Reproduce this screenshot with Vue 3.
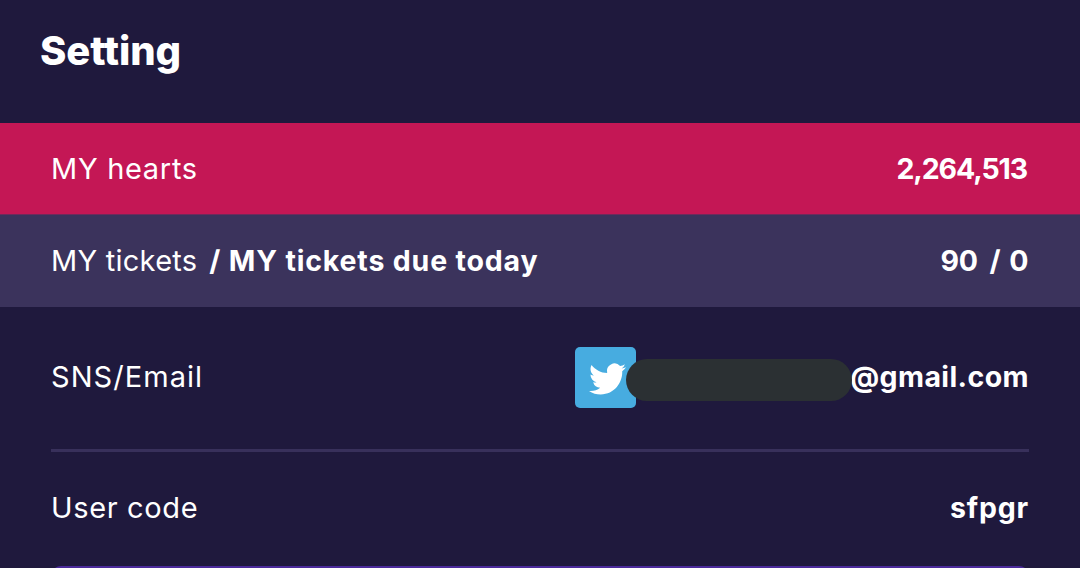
<template>
  <main class="setting-page">
    <header class="page-header">
      <h1 class="page-title">Setting</h1>
    </header>

    <section class="row row-hearts">
      <span class="label label-hearts">MY hearts</span>
      <strong class="value value-hearts">{{ hearts }}</strong>
    </section>

    <section class="row row-tickets">
      <div class="ticket-labels">
        <span class="label label-tickets">MY tickets</span>
        <strong class="value value-due">/ MY tickets due today</strong>
      </div>
      <strong class="value value-tickets">
        <span>{{ tickets.total }}</span>
        <span class="slash">/</span>
        <span>{{ tickets.dueToday }}</span>
      </strong>
    </section>

    <div class="account">
      <section class="row row-email">
        <span class="label label-email">SNS/Email</span>
        <div class="email">
          <span class="sns-icon">
            <svg viewBox="0 0 24 24" fill="currentColor" preserveAspectRatio="none">
              <path d="M23.953 4.57a10 10 0 01-2.825.775 4.958 4.958 0 002.163-2.723c-.951.555-2.005.959-3.127 1.184a4.92 4.92 0 00-8.384 4.482C7.69 8.095 4.067 6.13 1.64 3.162a4.822 4.822 0 00-.666 2.475c0 1.71.87 3.213 2.188 4.096a4.904 4.904 0 01-2.228-.616v.06a4.923 4.923 0 003.946 4.827 4.996 4.996 0 01-2.212.085 4.936 4.936 0 004.604 3.417 9.867 9.867 0 01-6.102 2.105c-.39 0-.779-.023-1.17-.067a13.995 13.995 0 007.557 2.209c9.053 0 13.998-7.496 13.998-13.985 0-.21 0-.42-.015-.63A9.935 9.935 0 0024 4.59z" />
            </svg>
          </span>
          <span class="mask"></span>
          <strong class="value value-email">{{ emailDomain }}</strong>
        </div>
      </section>

      <section class="row row-code">
        <span class="label label-code">User code</span>
        <strong class="value value-code">{{ userCode }}</strong>
      </section>
    </div>

    <div class="next-panel"></div>
  </main>
</template>

<script setup>
const hearts = (2264513).toLocaleString('en-US')
const tickets = { total: 90, dueToday: 0 }
const emailDomain = '@gmail.com'
const userCode = 'sfpgr'
</script>

<style>
body {
  background: #1f193d;
  overflow: hidden;
}
</style>

<style scoped>
.setting-page {
  display: flex;
  flex-direction: column;
  width: 100%;
  height: 568px;
  overflow: hidden;
  box-sizing: border-box;
  background: #1f193d;
  color: #fff;
  font-family: Inter, "Open Sans", sans-serif;
}

.page-header {
  flex: none;
  display: flex;
  height: 123px;
  box-sizing: border-box;
  padding: 26px 40px 0;
}

.page-title {
  margin: 0;
  font-size: 40px;
  line-height: 50px;
  font-weight: 800;
  letter-spacing: -0.1px;
}

.row {
  flex: none;
  display: flex;
  align-items: center;
  justify-content: space-between;
  box-sizing: border-box;
  white-space: nowrap;
}

.row-hearts {
  height: 91px;
  padding: 0 52px 0 51px;
  background: #c41755;
}

.row-tickets {
  height: 93px;
  padding: 0 52px 1px 51px;
  border-top: 1px solid #6f2a5b;
  background: #3b335c;
}

.ticket-labels {
  display: flex;
  align-items: center;
  gap: 12px;
}

.label {
  font-size: 29px;
  line-height: 40px;
  font-weight: 400;
}

.label-hearts {
  letter-spacing: 0.7px;
}

.label-tickets {
  letter-spacing: 0.25px;
}

.label-email {
  margin-top: -2px;
  letter-spacing: 1.05px;
}

.label-code {
  letter-spacing: 0.65px;
}

.value {
  font-size: 28.5px;
  line-height: 40px;
  font-weight: 700;
}

.value-hearts {
  margin-right: 1px;
  letter-spacing: -1.1px;
}

.value-due {
  letter-spacing: 0.83px;
}

.value-tickets {
  display: flex;
  letter-spacing: -0.4px;
}

.slash {
  margin: 0 9px 0 12px;
}

.value-email {
  margin-top: -2px;
  letter-spacing: 0.4px;
}

.value-code {
  letter-spacing: 0.8px;
}

.account {
  flex: none;
  padding: 0 51px;
}

.row-email {
  height: 145px;
  padding-bottom: 1px;
  border-bottom: 3px solid #38305b;
}

.row-code {
  height: 114px;
  padding-bottom: 2px;
}

.email {
  display: flex;
  align-items: center;
}

.sns-icon {
  display: flex;
  align-items: center;
  justify-content: center;
  width: 61px;
  height: 61px;
  box-sizing: border-box;
  padding: 3px 0 0 3px;
  border-radius: 5px;
  background: #47ace0;
}

.sns-icon svg {
  width: 37px;
  height: 38px;
}

.mask {
  z-index: 1;
  width: 226px;
  height: 42px;
  margin: 5px -2px 0 -10px;
  border-radius: 21px;
  background: #2b3033;
}

.next-panel {
  flex: none;
  height: 40px;
  margin: 0 51px;
  border-radius: 10px;
  background: #4b2a9b;
}
</style>
